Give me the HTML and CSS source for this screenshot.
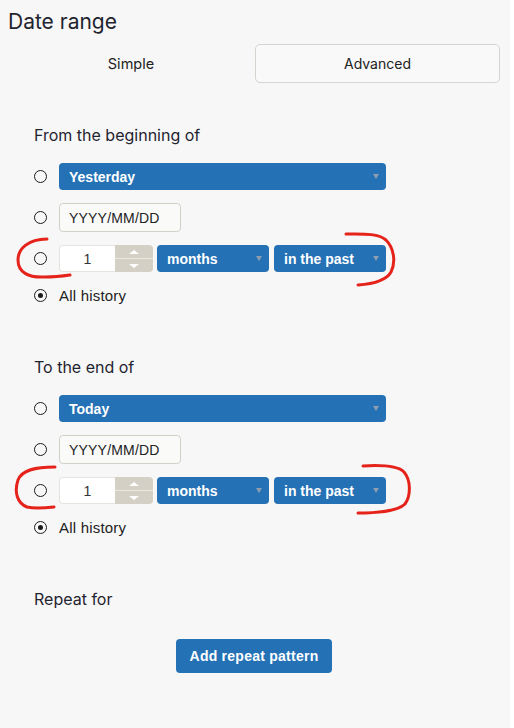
FILE: index.html
```html
<!DOCTYPE html>
<html lang="en">
<head>
<meta charset="utf-8">
<title>Date range</title>
<link rel="stylesheet" href="styles.css">
</head>
<body>
<div class="panel">
  <h1 class="title">Date range</h1>
  <div class="tabs">
    <div class="tab">Simple</div>
    <div class="tab tab-active">Advanced</div>
  </div>

  <section class="group">
    <h2 class="group-title">From the beginning of</h2>
    <div class="rows">
      <div class="row row-select">
        <span class="radio"></span>
        <div class="select select-wide"><span class="select-text">Yesterday</span><span class="caret"></span></div>
      </div>
      <div class="row row-input">
        <span class="radio"></span>
        <div class="date-input">YYYY/MM/DD</div>
      </div>
      <div class="row row-select">
        <span class="radio"></span>
        <div class="number">
          <span class="number-value">1</span>
          <span class="spinner"><span class="spin-up"></span><span class="spin-down"></span></span>
        </div>
        <div class="select select-small"><span class="select-text">months</span><span class="caret"></span></div>
        <div class="select select-small select-past"><span class="select-text">in the past</span><span class="caret"></span></div>
      </div>
      <div class="row row-text">
        <span class="radio radio-checked"></span>
        <span class="label">All history</span>
      </div>
    </div>
  </section>

  <section class="group">
    <h2 class="group-title">To the end of</h2>
    <div class="rows">
      <div class="row row-select">
        <span class="radio"></span>
        <div class="select select-wide"><span class="select-text">Today</span><span class="caret"></span></div>
      </div>
      <div class="row row-input">
        <span class="radio"></span>
        <div class="date-input">YYYY/MM/DD</div>
      </div>
      <div class="row row-select">
        <span class="radio"></span>
        <div class="number">
          <span class="number-value">1</span>
          <span class="spinner"><span class="spin-up"></span><span class="spin-down"></span></span>
        </div>
        <div class="select select-small"><span class="select-text">months</span><span class="caret"></span></div>
        <div class="select select-small select-past"><span class="select-text">in the past</span><span class="caret"></span></div>
      </div>
      <div class="row row-text">
        <span class="radio radio-checked"></span>
        <span class="label">All history</span>
      </div>
    </div>
  </section>

  <section class="group">
    <h2 class="group-title">Repeat for</h2>
    <div class="actions">
      <button class="btn" type="button">Add repeat pattern</button>
    </div>
  </section>

  <svg class="annotations" width="514" height="728" viewBox="0 0 514 728" aria-hidden="true">
    <path d="M47,239 C28,239 18,249 18,260 C18,272 28,278 45,277 C55,277 63,276 70,275"/>
    <path d="M346,234 C362,234 378,233 386,240 C394,248 396,262 391,272 C386,281 372,284 358,285"/>
    <path d="M55,467 C35,467 22,470 18,480 C14,492 17,503 27,507 C35,509 45,508 54,507"/>
    <path d="M363,466 C380,465 398,466 404,472 C411,480 411,496 405,504 C398,511 375,513 358,513"/>
  </svg>
</div>
</body>
</html>
```
FILE: styles.css
```css
* { box-sizing: border-box; }

html, body {
  margin: 0;
  padding: 0;
  background: #ffffff;
}

.panel {
  position: relative;
  width: 510px;
  min-height: 728px;
  background: #f7f7f7;
  padding: 9px 10px 0 8px;
  color: #1f2430;
  font-family: Inter, "Liberation Sans", Arial, sans-serif;
}

.title {
  margin: 0;
  font-size: 21px;
  line-height: 25px;
  font-weight: 400;
  color: #1f2430;
}

.tabs {
  display: grid;
  grid-template-columns: 1fr 1fr;
  margin-top: 10px;
  height: 39px;
}

.tab {
  display: flex;
  align-items: center;
  justify-content: center;
  font-size: 14.5px;
  color: #222;
  border: 1px solid transparent;
  border-radius: 5px;
}

.tab-active {
  border-color: #d6d4cf;
  background: #f9f9f9;
  margin-left: 1px;
  font-size: 14px;
}

.group {
  margin-top: 51px;
  padding-left: 26px;
}

.tabs + .group {
  margin-top: 41px;
}

.group-title {
  margin: 0;
  font-size: 16px;
  line-height: 20px;
  font-weight: 400;
  color: #1f2430;
  padding-top: 1px;
  height: 20px;
}

.rows {
  display: flex;
  flex-direction: column;
  gap: 13px;
  margin-top: 19px;
}

.row {
  display: flex;
  align-items: center;
}

.row-select { height: 27px; }
.row-input { height: 29px; }
.row-text { height: 20px; }

.radio {
  flex: none;
  width: 13px;
  height: 13px;
  border: 1.6px solid #1b1b1f;
  border-radius: 50%;
  margin-right: 12px;
  display: flex;
  align-items: center;
  justify-content: center;
}

.radio-checked::after {
  content: "";
  width: 5px;
  height: 5px;
  border-radius: 50%;
  background: #1b1b1f;
}

.label {
  font-family: "Liberation Sans", Arial, sans-serif;
  font-size: 15px;
  letter-spacing: 0.2px;
  color: #222;
}

.select {
  display: flex;
  align-items: center;
  height: 27px;
  background: #2471b5;
  border-radius: 4px;
  color: #ffffff;
  font-family: "Liberation Sans", Arial, sans-serif;
  font-size: 14px;
  font-weight: 700;
  padding: 0 7px 0 10px;
}

.select-wide { width: 327px; }

.select-small {
  width: 112px;
  margin-left: 4px;
}

.select-past { margin-left: 5px; }

.select-text { flex: 1; }

.caret {
  flex: none;
  width: 0;
  height: 0;
  border-left: 3.5px solid transparent;
  border-right: 3.5px solid transparent;
  border-top: 5px solid #8f9db0;
}

.date-input {
  display: flex;
  align-items: center;
  width: 122px;
  height: 29px;
  padding-left: 9px;
  border: 1px solid #d3d0c9;
  border-radius: 4px;
  background: #fafaf9;
  font-family: "Liberation Sans", Arial, sans-serif;
  font-size: 14px;
  letter-spacing: 0.2px;
  color: #222;
}

.number {
  display: flex;
  width: 94px;
  height: 27px;
}

.number-value {
  flex: 1;
  display: flex;
  align-items: center;
  justify-content: center;
  background: #ffffff;
  border: 1px solid #e6e4df;
  border-right: none;
  border-radius: 4px 0 0 4px;
  font-family: "Liberation Sans", Arial, sans-serif;
  font-size: 14px;
  color: #333;
}

.spinner {
  width: 38px;
  display: flex;
  flex-direction: column;
  background: #d5d0c6;
  border-radius: 0 4px 4px 0;
}

.spin-up, .spin-down {
  flex: 1;
  display: flex;
  align-items: center;
  justify-content: center;
}

.spin-up { border-bottom: 1px solid #ebe8e2; }

.spin-up::after {
  content: "";
  border-left: 5px solid transparent;
  border-right: 5px solid transparent;
  border-bottom: 4px solid #ffffff;
}

.spin-down::after {
  content: "";
  border-left: 5px solid transparent;
  border-right: 5px solid transparent;
  border-top: 4px solid #ffffff;
}

.actions {
  display: flex;
  justify-content: center;
  margin-top: 31px;
  margin-left: -26px;
}

.btn {
  height: 34px;
  padding: 0 14px;
  border: none;
  border-radius: 4px;
  background: #2471b5;
  color: #ffffff;
  font-family: "Liberation Sans", Arial, sans-serif;
  font-size: 14px;
  font-weight: 700;
  letter-spacing: 0.25px;
}

.annotations {
  position: absolute;
  top: 0;
  left: 0;
  pointer-events: none;
}

.annotations path {
  fill: none;
  stroke: #e5231b;
  stroke-width: 3;
  stroke-linecap: round;
  stroke-linejoin: round;
}
```
